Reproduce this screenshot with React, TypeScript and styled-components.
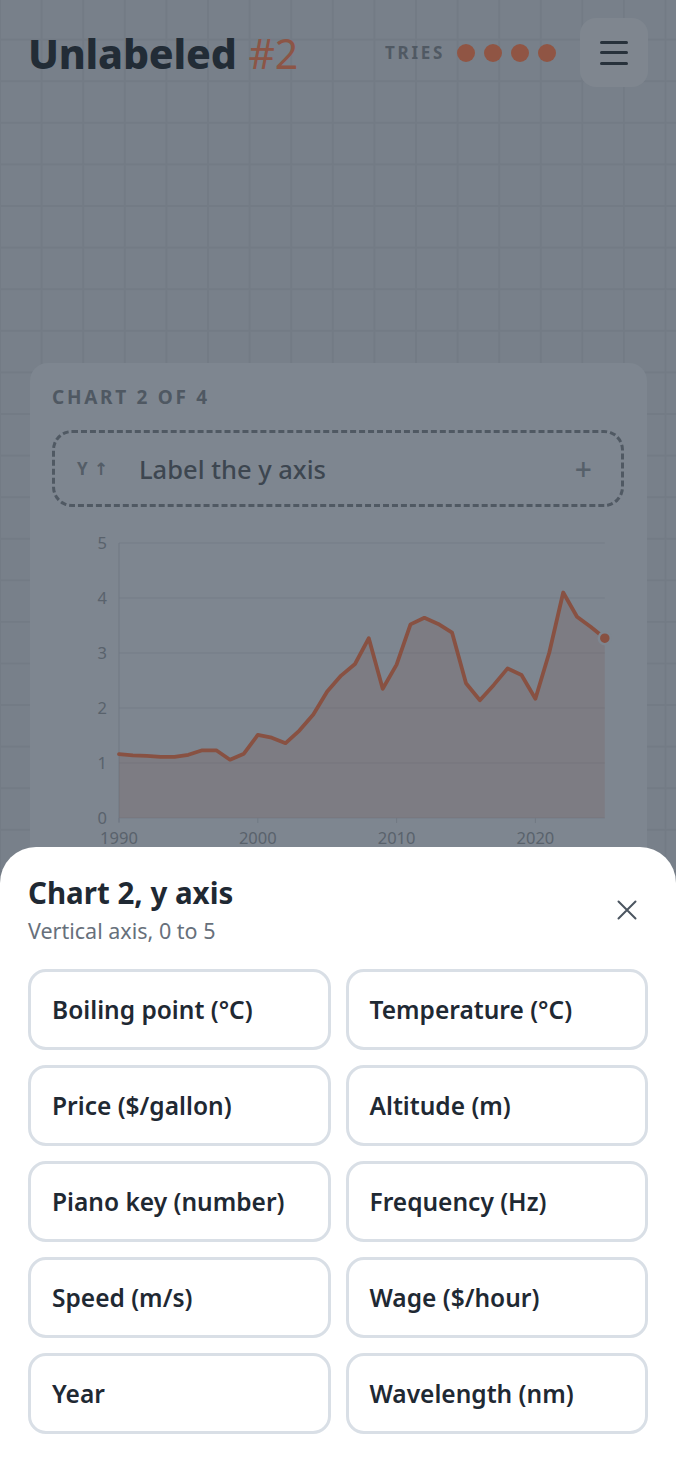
import React from "react";
import styled, { createGlobalStyle } from "styled-components";

const GlobalStyle = createGlobalStyle`
  html, body {
    margin: 0;
    padding: 0;
  }
  body {
    font-family: "Noto Sans", "DejaVu Sans", sans-serif;
    background: #78808a;
  }
  * {
    box-sizing: border-box;
  }
`;

const Page = styled.div`
  min-height: 1464px;
  background-color: #78808a;
  background-image: linear-gradient(#737b85 1.5px, transparent 1.5px),
    linear-gradient(90deg, #737b85 1.5px, transparent 1.5px);
  background-size: 41.6px 41.6px;
  background-position: -1px -3px;
  overflow: hidden;
`;

const Header = styled.header`
  display: flex;
  align-items: center;
  justify-content: space-between;
  padding: 18px 28px 0 28px;
`;

const Title = styled.h1`
  margin: 0;
  font-size: 41px;
  font-weight: 800;
  color: #222c36;
  letter-spacing: -0.2px;
`;

const Accent = styled.span`
  font-weight: 400;
  color: #8c5546;
  margin-left: 12px;
`;

const Right = styled.div`
  display: flex;
  align-items: center;
`;

const Tries = styled.span`
  font-size: 17px;
  font-weight: 700;
  letter-spacing: 2.7px;
  color: #505963;
  margin-right: 12px;
`;

const Dots = styled.div`
  display: flex;
  gap: 9px;
  margin-right: 24px;
`;

const Dot = styled.span`
  width: 18px;
  height: 18px;
  border-radius: 50%;
  background: #905544;
`;

const MenuButton = styled.button`
  width: 68px;
  height: 69px;
  border: none;
  border-radius: 16px;
  background: #7f868f;
  display: flex;
  flex-direction: column;
  align-items: center;
  justify-content: center;
  gap: 7.5px;
  padding: 0;
`;

const MenuLine = styled.span`
  width: 28px;
  height: 3px;
  border-radius: 2px;
  background: #27313b;
`;

const Card = styled.section`
  margin: 276px 29px 0 30px;
  background: #7e8690;
  border-radius: 18px;
  padding: 22px 23px 40px 22px;
`;

const CardLabel = styled.div`
  font-size: 19px;
  font-weight: 700;
  letter-spacing: 2.7px;
  color: #4f5862;
  line-height: 24px;
`;

const DropZone = styled.div`
  margin-top: 21px;
  height: 77px;
  border: 3px dashed #505963;
  border-radius: 20px;
  display: flex;
  align-items: center;
  padding: 0 29px 0 22px;
`;

const AxisTag = styled.span`
  font-size: 17px;
  font-weight: 700;
  letter-spacing: 1px;
  color: #545d67;
  width: 62px;
`;

const DropText = styled.span`
  flex: 1;
  font-size: 25.5px;
  font-weight: 500;
  color: #3d4650;
`;

const Plus = styled.span`
  font-size: 30px;
  font-weight: 500;
  color: #56606a;
  line-height: 1;
`;

const ChartSvg = styled.svg`
  display: block;
  margin-top: 18px;
  overflow: visible;
`;

const Sheet = styled.div`
  position: fixed;
  left: 0;
  right: 0;
  bottom: 0;
  top: 847px;
  background: #ffffff;
  border-radius: 36px 36px 0 0;
  padding: 28px 28px 29px 28px;
`;

const SheetHead = styled.div`
  display: flex;
  align-items: center;
  justify-content: space-between;
`;

const SheetTitle = styled.h2`
  margin: 0;
  font-size: 29.5px;
  line-height: 36px;
  font-weight: 700;
  color: #1f2933;
`;

const SheetSub = styled.div`
  font-size: 21.5px;
  line-height: 28px;
  color: #67707b;
  margin-top: 6px;
`;

const CloseButton = styled.button`
  border: none;
  background: none;
  padding: 0;
  margin-right: 11px;
  display: flex;
  color: #4b5560;
`;

const Options = styled.div`
  margin-top: 24px;
  display: grid;
  grid-template-columns: 1fr 1fr;
  gap: 15px;
`;

const Option = styled.button`
  height: 81px;
  border: 3px solid #d9dfe6;
  border-radius: 18px;
  background: #ffffff;
  text-align: left;
  padding: 0 0 0 21px;
  font-family: "Noto Sans", "DejaVu Sans", sans-serif;
  font-size: 24.5px;
  font-weight: 600;
  color: #1f2933;
`;

const data: [number, number][] = [
  [1990, 1.16], [1991, 1.14], [1992, 1.13], [1993, 1.11], [1994, 1.11],
  [1995, 1.15], [1996, 1.23], [1997, 1.23], [1998, 1.06], [1999, 1.17],
  [2000, 1.51], [2001, 1.46], [2002, 1.36], [2003, 1.59], [2004, 1.88],
  [2005, 2.3], [2006, 2.59], [2007, 2.8], [2008, 3.27], [2009, 2.35],
  [2010, 2.79], [2011, 3.52], [2012, 3.64], [2013, 3.53], [2014, 3.37],
  [2015, 2.45], [2016, 2.14], [2017, 2.42], [2018, 2.72], [2019, 2.6],
  [2020, 2.17], [2021, 3.01], [2022, 4.1], [2023, 3.66], [2024, 3.47],
  [2025, 3.27],
];

const options = [
  "Boiling point (°C)",
  "Temperature (°C)",
  "Price ($/gallon)",
  "Altitude (m)",
  "Piano key (number)",
  "Frequency (Hz)",
  "Speed (m/s)",
  "Wage ($/hour)",
  "Year",
  "Wavelength (nm)",
];

const X0 = 67;
const PER_YEAR = 13.88;
const Y0 = 293;
const PER_UNIT = 55;

const sx = (year: number) => X0 + (year - 1990) * PER_YEAR;
const sy = (v: number) => Y0 - v * PER_UNIT;

function Chart() {
  const line = data.map(([y, v], i) => `${i ? "L" : "M"}${sx(y).toFixed(1)} ${sy(v).toFixed(1)}`).join(" ");
  const last = data[data.length - 1];
  const area = `${line} L${sx(last[0]).toFixed(1)} ${Y0} L${X0} ${Y0} Z`;
  return (
    <ChartSvg width="572" height="330" viewBox="0 0 572 330">
      {[0, 1, 2, 3, 4, 5].map((v) => (
        <g key={v}>
          <line x1={X0} x2={sx(2025)} y1={sy(v)} y2={sy(v)} stroke="#757d87" strokeWidth="1" />
          <text x={X0 - 12} y={sy(v) + 6} textAnchor="end" fontSize="16.5" fill="#59626c" fontFamily="Noto Sans, sans-serif">
            {v}
          </text>
        </g>
      ))}
      <line x1={X0} x2={X0} y1={sy(5)} y2={Y0 + 4} stroke="#717983" strokeWidth="1" />
      {[1990, 2000, 2010, 2020].map((yr) => (
        <g key={yr}>
          <line x1={sx(yr)} x2={sx(yr)} y1={Y0} y2={Y0 + 5} stroke="#717983" strokeWidth="1" />
          <text x={sx(yr)} y={Y0 + 26} textAnchor="middle" fontSize="16.5" fill="#59626c" fontFamily="Noto Sans, sans-serif">
            {yr}
          </text>
        </g>
      ))}
      <path d={area} fill="#7d5a55" fillOpacity="0.22" />
      <path d={line} fill="none" stroke="#885142" strokeWidth="3.8" strokeLinejoin="round" strokeLinecap="round" />
      <circle cx={sx(last[0])} cy={sy(last[1])} r="6" fill="#885142" stroke="#7e8690" strokeWidth="2.5" />
    </ChartSvg>
  );
}

export default function App() {
  return (
    <Page>
      <GlobalStyle />
      <Header>
        <Title>
          Unlabeled<Accent>#2</Accent>
        </Title>
        <Right>
          <Tries>TRIES</Tries>
          <Dots>
            <Dot />
            <Dot />
            <Dot />
            <Dot />
          </Dots>
          <MenuButton aria-label="Menu">
            <MenuLine />
            <MenuLine />
            <MenuLine />
          </MenuButton>
        </Right>
      </Header>

      <Card>
        <CardLabel>CHART 2 OF 4</CardLabel>
        <DropZone>
          <AxisTag>Y ↑</AxisTag>
          <DropText>Label the y axis</DropText>
          <Plus>+</Plus>
        </DropZone>
        <Chart />
      </Card>

      <Sheet>
        <SheetHead>
          <div>
            <SheetTitle>Chart 2, y axis</SheetTitle>
            <SheetSub>Vertical axis, 0 to 5</SheetSub>
          </div>
          <CloseButton aria-label="Close">
            <svg width="20" height="20" viewBox="0 0 20 20" fill="none" stroke="currentColor" strokeWidth="2" strokeLinecap="round">
              <path d="M1.5 1.5 L18.5 18.5 M18.5 1.5 L1.5 18.5" />
            </svg>
          </CloseButton>
        </SheetHead>
        <Options>
          {options.map((o) => (
            <Option key={o}>{o}</Option>
          ))}
        </Options>
      </Sheet>
    </Page>
  );
}
